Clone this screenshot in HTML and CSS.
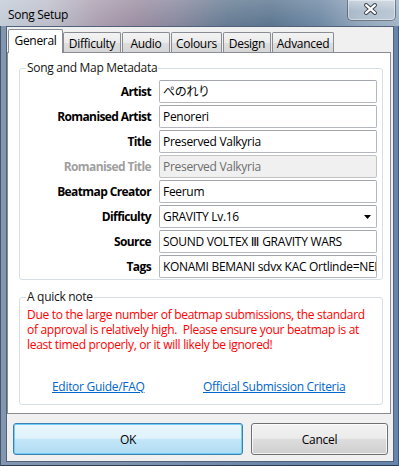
FILE: index.html
```html
<!DOCTYPE html>
<html>
<head>
<meta charset="utf-8">
<link rel="stylesheet" href="styles.css">
</head>
<body>
<div class="window">
  <div class="titlebar">
    <span class="title">Song Setup</span>
    <div class="close">
      <svg width="49" height="21" viewBox="0 0 49 21">
        <path d="M19.5 6L28.5 14M28.5 6L19.5 14" stroke="#3a3f48" stroke-width="4.2" stroke-linecap="round" fill="none"/>
        <path d="M19.5 6L28.5 14M28.5 6L19.5 14" stroke="#ffffff" stroke-width="2.2" stroke-linecap="round" fill="none"/>
      </svg>
    </div>
  </div>
  <div class="client">
    <div class="tabs">
      <div class="tab active t-general">General</div>
      <div class="tab t-difficulty">Difficulty</div>
      <div class="tab t-audio">Audio</div>
      <div class="tab t-colours">Colours</div>
      <div class="tab t-design">Design</div>
      <div class="tab t-advanced">Advanced</div>
    </div>
    <div class="panel">
      <fieldset class="group meta">
        <legend>Song and Map Metadata</legend>
        <div class="form">
          <label class="lbl">Artist</label><div class="field">ぺのれり</div>
          <label class="lbl">Romanised Artist</label><div class="field">Penoreri</div>
          <label class="lbl">Title</label><div class="field">Preserved Valkyria</div>
          <label class="lbl disabled">Romanised Title</label><div class="field disabled">Preserved Valkyria</div>
          <label class="lbl">Beatmap Creator</label><div class="field">Feerum</div>
          <label class="lbl">Difficulty</label><div class="field combo"><span>GRAVITY Lv.16</span><svg class="arrow" width="7" height="4" viewBox="0 0 7 4"><path d="M0 0H7L3.5 4Z" fill="#000"/></svg></div>
          <label class="lbl">Source</label><div class="field">SOUND VOLTEX <span class="roman">Ⅲ</span> GRAVITY WARS</div>
          <label class="lbl">Tags</label><div class="field">KONAMI BEMANI sdvx KAC Ortlinde=NEMSYS</div>
        </div>
      </fieldset>
      <fieldset class="group note">
        <legend>A quick note</legend>
        <div class="warn">
          <div class="line">Due to the large number of beatmap submissions, the standard</div>
          <div class="line">of approval is relatively high.  Please ensure your beatmap is at</div>
          <div class="line">least timed properly, or it will likely be ignored!</div>
        </div>
        <div class="links">
          <a class="link">Editor Guide/FAQ</a>
          <a class="link">Official Submission Criteria</a>
        </div>
      </fieldset>
    </div>
    <div class="buttons">
      <button class="btn ok">OK</button>
      <button class="btn cancel">Cancel</button>
    </div>
  </div>
</div>
</body>
</html>
```
FILE: styles.css
```css
* { box-sizing: border-box; }
html, body { margin: 0; padding: 0; }
body {
  width: 399px;
  height: 466px;
  overflow: hidden;
  font-family: "Open Sans", "Noto Sans CJK JP", sans-serif;
  font-size: 12px;
  letter-spacing: -0.3px;
  color: #000;
}
.window {
  width: 399px;
  height: 466px;
  display: flex;
  flex-direction: column;
  background: linear-gradient(90deg, #8396b0 0%, #7f93ae 30%, #6a86a8 70%, #6785ad 100%);
  box-shadow: inset 1px 0 0 #44576f, inset -1px 0 0 #44576f, inset 0 -1px 0 #2c3d55;
}
.titlebar {
  height: 26px;
  flex: none;
  display: flex;
  justify-content: space-between;
  align-items: flex-start;
  background:
    linear-gradient(180deg, rgba(255,255,255,0.18) 0%, rgba(255,255,255,0) 100%),
    linear-gradient(90deg, #c3ccd7 0%, #bdbfcb 12%, #ab9fb0 24%, #9c8ea2 34%, #86879d 45%, #657b92 57%, #5c7690 68%, #6d87a3 80%, #90a5bb 90%, #a2b4c6 100%);
}
.title {
  padding-left: 8px;
  margin-top: 7px;
  line-height: 16px;
}
.close {
  width: 49px;
  height: 21px;
  margin-right: 3px;
  border: 1px solid rgba(40, 50, 65, 0.55);
  border-top: none;
  border-radius: 0 0 5px 5px;
  background: linear-gradient(180deg, rgba(255,255,255,0.45) 0%, rgba(255,255,255,0.2) 55%, rgba(255,255,255,0.28) 100%);
  box-shadow: inset 0 0 0 1px rgba(255,255,255,0.4);
  display: flex;
}
.close svg { display: block; margin: -1px 0 0 -1px; }
.client {
  flex: none;
  height: 436px;
  margin: 0 5px 4px 6px;
  border: 1px solid #50627a;
  background: #f0f0f0;
  display: flex;
  flex-direction: column;
}
.tabs {
  height: 25px;
  flex: none;
  display: flex;
  align-items: flex-end;
  padding-left: 1px;
}
.tab {
  height: 20px;
  border: 1px solid #898c95;
  border-bottom: none;
  border-radius: 2px 2px 0 0;
  background: linear-gradient(180deg, #f3f3f3 0%, #ebebeb 50%, #dedede 51%, #d6d6d6 100%);
  display: flex;
  align-items: center;
  justify-content: center;
  margin-left: 1px;
  padding-top: 1px;
}
.tab.active {
  height: 24px;
  margin-bottom: -1px;
  margin-left: 0;
  background: #fff;
  position: relative;
  z-index: 1;
  padding-top: 0;
  padding-bottom: 2px;
}
.t-general { width: 55px; }
.t-difficulty { width: 58px; margin-left: 0; }
.t-audio { width: 48px; }
.t-colours { width: 51px; }
.t-design { width: 48px; }
.t-advanced { width: 62px; }
.panel {
  width: 384px;
  height: 362px;
  flex: none;
  border: 1px solid #898c95;
  background: #fff;
  display: flex;
  flex-direction: column;
}
.group {
  margin: 0 7px 0 11px;
  border: 1px solid #d5dfe5;
  border-radius: 3px;
  min-width: 0;
}
.group legend {
  margin-left: 6px;
  padding: 0 1px;
  line-height: 16px;
  color: #151515;
}
.meta {
  margin-top: 7px;
  padding: 4px 5px 1px 0;
}
.form {
  display: grid;
  grid-template-columns: 131px 218px;
  grid-auto-rows: 23px;
  column-gap: 8px;
  row-gap: 2px;
}
.lbl {
  font-weight: bold;
  text-align: right;
  line-height: 23px;
  white-space: nowrap;
  letter-spacing: -0.6px;
}
.lbl.disabled { color: #a0a0a0; }
.field {
  border: 1px solid #b4b7bf;
  border-top-color: #a3a6ae;
  border-radius: 2px;
  padding: 0 3px;
  line-height: 21px;
  white-space: nowrap;
  overflow: hidden;
  background: #fff;
}
.field.disabled {
  background: #f0f0f0;
  color: #6d6d6d;
  border-color: #c2c2c2;
}
.roman { font-family: "DejaVu Sans", sans-serif; font-size: 12.5px; letter-spacing: 0; }
.combo {
  display: flex;
  align-items: center;
  padding-right: 5px;
}
.combo .arrow { margin-left: auto; }
.note {
  margin-top: 9px;
  padding: 2px 0 10px 0;
}
.warn { color: #ff0000; padding-left: 7px; }
.line { line-height: 15px; white-space: pre; }
.links {
  margin-top: 27px;
  display: grid;
  grid-template-columns: 151px auto;
  padding-left: 32px;
}
.link {
  color: #0066cc;
  text-decoration: underline;
  line-height: 15px;
  justify-self: start;
}
.buttons {
  margin-top: 9px;
  height: 32px;
  display: flex;
  gap: 8px;
  padding: 0 5px 0 6px;
}
.btn {
  font: inherit;
  letter-spacing: inherit;
  color: #000;
  height: 32px;
  border-radius: 3px;
  padding: 0;
}
.ok {
  width: 230px;
  border: 1px solid #3c7fb1;
  background: linear-gradient(180deg, #eaf6fd 0%, #dff2fc 48%, #c4e6f8 50%, #b0dcf3 100%);
  box-shadow: inset 0 0 0 1px #6fcff7;
}
.cancel {
  width: 137px;
  border: 1px solid #707070;
  background: linear-gradient(180deg, #f2f2f2 0%, #ebebeb 48%, #dddddd 50%, #cfcfcf 100%);
  box-shadow: inset 0 0 0 1px rgba(255,255,255,0.75);
}
```
